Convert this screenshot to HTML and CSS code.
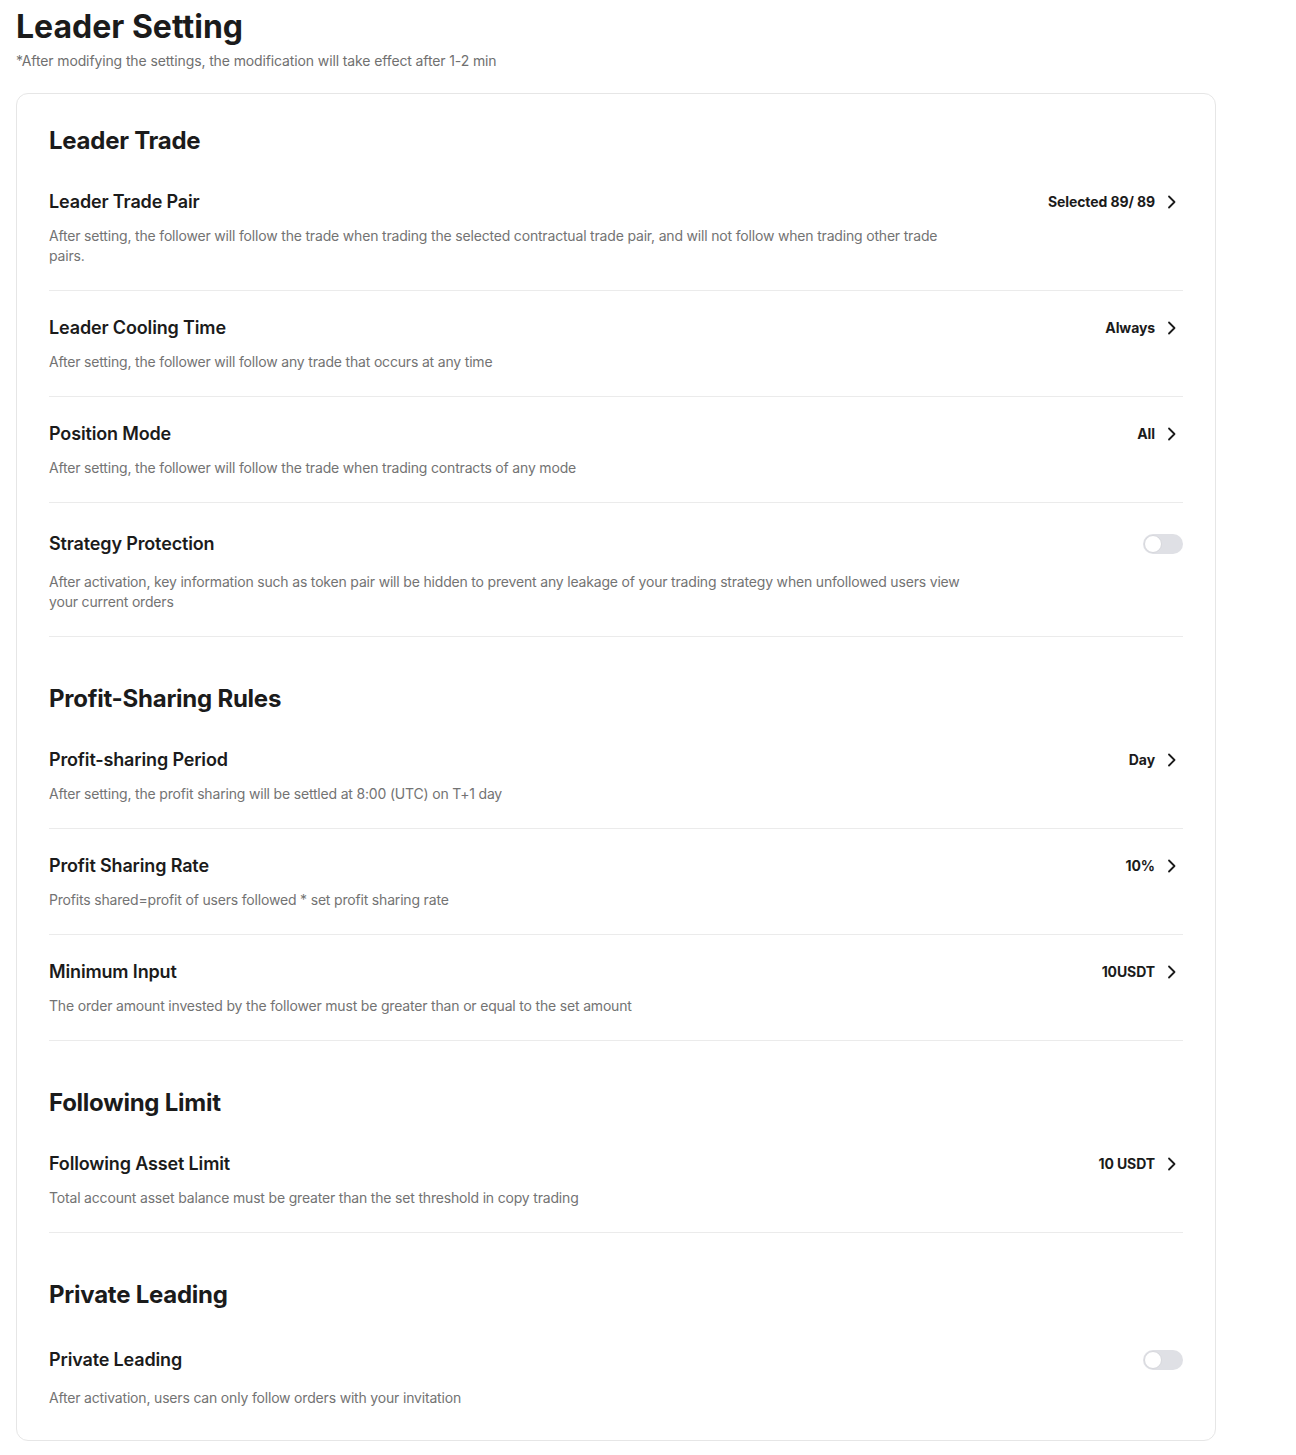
FILE: index.html
```html
<!DOCTYPE html>
<html lang="en">
<head>
<meta charset="utf-8">
<title>Leader Setting</title>
<link rel="stylesheet" href="styles.css">
</head>
<body>
<div class="page">
  <h1 class="page-title">Leader Setting</h1>
  <p class="page-note">*After modifying the settings, the modification will take effect after 1-2 min</p>

  <div class="card">
    <section class="section">
      <h2 class="section-title">Leader Trade</h2>
      <div class="row">
        <div class="row-head">
          <div class="row-title">Leader Trade Pair</div>
          <div class="row-value">Selected 89/ 89 <svg class="chev" viewBox="0 0 12 16"><path d="M3 2.5l5.5 5.5L3 13.5"/></svg></div>
        </div>
        <div class="row-desc">After setting, the follower will follow the trade when trading the selected contractual trade pair, and will not follow when trading other trade pairs.</div>
      </div>
      <div class="row">
        <div class="row-head">
          <div class="row-title">Leader Cooling Time</div>
          <div class="row-value">Always <svg class="chev" viewBox="0 0 12 16"><path d="M3 2.5l5.5 5.5L3 13.5"/></svg></div>
        </div>
        <div class="row-desc">After setting, the follower will follow any trade that occurs at any time</div>
      </div>
      <div class="row">
        <div class="row-head">
          <div class="row-title">Position Mode</div>
          <div class="row-value">All <svg class="chev" viewBox="0 0 12 16"><path d="M3 2.5l5.5 5.5L3 13.5"/></svg></div>
        </div>
        <div class="row-desc">After setting, the follower will follow the trade when trading contracts of any mode</div>
      </div>
      <div class="row">
        <div class="row-head row-head-switch">
          <div class="row-title">Strategy Protection</div>
          <span class="switch"><span class="knob"></span></span>
        </div>
        <div class="row-desc">After activation, key information such as token pair will be hidden to prevent any leakage of your trading strategy when unfollowed users view your current orders</div>
      </div>
    </section>

    <section class="section">
      <h2 class="section-title">Profit-Sharing Rules</h2>
      <div class="row">
        <div class="row-head">
          <div class="row-title">Profit-sharing Period</div>
          <div class="row-value">Day <svg class="chev" viewBox="0 0 12 16"><path d="M3 2.5l5.5 5.5L3 13.5"/></svg></div>
        </div>
        <div class="row-desc">After setting, the profit sharing will be settled at 8:00 (UTC) on T+1 day</div>
      </div>
      <div class="row">
        <div class="row-head">
          <div class="row-title">Profit Sharing Rate</div>
          <div class="row-value">10% <svg class="chev" viewBox="0 0 12 16"><path d="M3 2.5l5.5 5.5L3 13.5"/></svg></div>
        </div>
        <div class="row-desc">Profits shared=profit of users followed * set profit sharing rate</div>
      </div>
      <div class="row">
        <div class="row-head">
          <div class="row-title">Minimum Input</div>
          <div class="row-value">10USDT <svg class="chev" viewBox="0 0 12 16"><path d="M3 2.5l5.5 5.5L3 13.5"/></svg></div>
        </div>
        <div class="row-desc">The order amount invested by the follower must be greater than or equal to the set amount</div>
      </div>
    </section>

    <section class="section">
      <h2 class="section-title">Following Limit</h2>
      <div class="row">
        <div class="row-head">
          <div class="row-title">Following Asset Limit</div>
          <div class="row-value">10 USDT <svg class="chev" viewBox="0 0 12 16"><path d="M3 2.5l5.5 5.5L3 13.5"/></svg></div>
        </div>
        <div class="row-desc">Total account asset balance must be greater than the set threshold in copy trading</div>
      </div>
    </section>

    <section class="section">
      <h2 class="section-title">Private Leading</h2>
      <div class="row">
        <div class="row-head row-head-switch">
          <div class="row-title">Private Leading</div>
          <span class="switch"><span class="knob"></span></span>
        </div>
        <div class="row-desc">After activation, users can only follow orders with your invitation</div>
      </div>
    </section>
  </div>
</div>
</body>
</html>
```

FILE: styles.css
```css
* { box-sizing: border-box; }
html, body { margin: 0; padding: 0; background: #fff; }
body {
  font-family: Inter, Roboto, "Liberation Sans", sans-serif;
  color: #1e1e1e;
}
.page {
  padding: 6px 16px 16px 16px;
  width: 1232px;
}
.page-title {
  margin: 0;
  font-size: 32px;
  line-height: 42px;
  font-weight: 700;
  color: #1b1b1b;
}
.page-note {
  margin: 3px 0 0 0;
  font-size: 14px;
  line-height: 20px;
  letter-spacing: -0.12px;
  color: #707070;
}
.card {
  margin-top: 22px;
  width: 1200px;
  border: 1px solid #e6e6e6;
  border-radius: 12px;
  padding: 31px 32px 32px 32px;
}
.section + .section { margin-top: 46px; }
.section-title {
  margin: 0 0 8px 0;
  font-size: 24px;
  line-height: 32px;
  font-weight: 700;
  letter-spacing: -0.25px;
  color: #1b1b1b;
}
.row {
  padding: 24px 0 24px 0;
  border-bottom: 1px solid #ebebeb;
}
.section:last-child .row:last-child {
  border-bottom: none;
  padding-bottom: 0;
}
.row-head {
  display: flex;
  align-items: center;
  justify-content: space-between;
  min-height: 26px;
}
.row-head-switch { min-height: 34px; }
.row-title {
  font-size: 18px;
  line-height: 26px;
  font-weight: 600;
  letter-spacing: -0.15px;
  color: #1b1b1b;
}
.row-value {
  display: flex;
  align-items: center;
  gap: 11px;
  font-size: 14px;
  line-height: 20px;
  font-weight: 700;
  letter-spacing: -0.1px;
  color: #1b1b1b;
}
.chev {
  width: 12px;
  height: 16px;
  margin-right: 5px;
  fill: none;
  stroke: #1b1b1b;
  stroke-width: 1.8;
  stroke-linecap: round;
  stroke-linejoin: round;
}
.row-desc {
  margin-top: 11px;
  max-width: 915px;
  font-size: 14px;
  line-height: 20px;
  letter-spacing: -0.18px;
  color: #737373;
}
.switch {
  position: relative;
  display: inline-block;
  width: 40px;
  height: 20px;
  border-radius: 10px;
  background: #dfe0e5;
}
.knob {
  position: absolute;
  left: 1px;
  top: 1px;
  width: 18px;
  height: 18px;
  border-radius: 50%;
  background: #fff;
  border: 1px solid #d6d7dc;
}
```
